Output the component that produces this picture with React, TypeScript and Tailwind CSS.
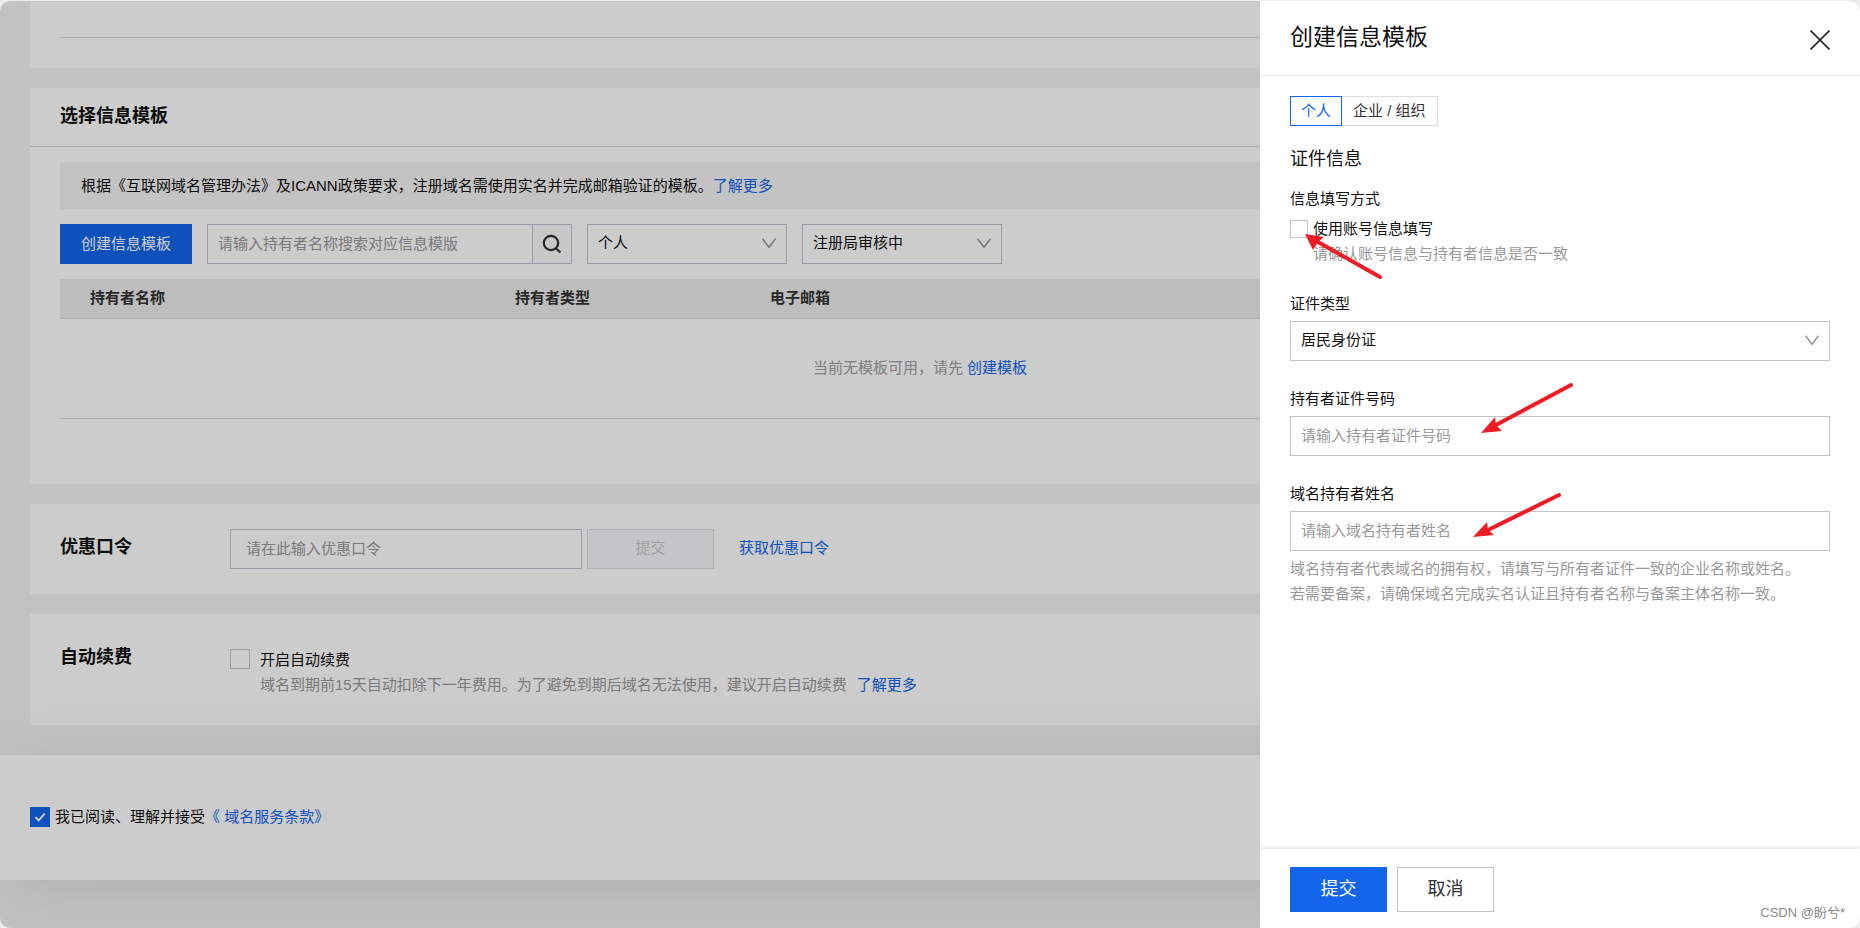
import { useState, type ReactNode } from "react"

const textInput =
  "block h-10 w-full border border-[#c2c2cf] bg-white px-[10px] pb-[2px] text-[15px] text-[#111] outline-none placeholder:text-[#999]"

function Chevron() {
  return (
    <svg
      className="pointer-events-none absolute top-[14px] right-[10px] h-[12px] w-[16px]"
      viewBox="0 0 16 12"
      fill="none"
      stroke="#999"
      strokeWidth="1.6"
    >
      <path d="M1.5 .8 8 9.3 14.5 .8" />
    </svg>
  )
}

function SelectBox({ id, label, value }: { id: string; label?: string; value: string }) {
  return (
    <div className="relative">
      <select
        id={id}
        aria-label={label}
        className="block h-10 w-full appearance-none border border-[#c2c2cf] bg-white px-[10px] pb-[2px] text-[15px] text-[#111] outline-none"
      >
        <option>{value}</option>
      </select>
      <Chevron />
    </div>
  )
}

function Link({ children }: { children: ReactNode }) {
  return (
    <a href="#" className="text-[#1366ec]">
      {children}
    </a>
  )
}

function TemplateSection() {
  return (
    <section className="bg-white pb-[65px]">
      <h2 className="border-b border-[#d9d9d9] px-[30px] pt-[15px] pb-4 text-[18px] leading-[27px] font-bold">
        选择信息模板
      </h2>
      <div className="px-[30px] pt-[15px]">
        <p className="bg-[#f4f4f4] px-[21px] py-3 leading-[23px]">
          根据《互联网域名管理办法》及ICANN政策要求，注册域名需使用实名并完成邮箱验证的模板。
          <Link>了解更多</Link>
        </p>
        <div className="mt-[15px] flex gap-[15px]">
          <button className="h-10 w-[132px] bg-[#1366ec] text-white">创建信息模板</button>
          <div className="flex w-[365px]">
            <input aria-label="搜索信息模版" placeholder="请输入持有者名称搜索对应信息模版" className={textInput} />
            <button
              aria-label="搜索"
              className="flex h-10 w-[39px] shrink-0 items-center justify-center border border-l-0 border-[#c2c2cf] bg-[#fafafa]"
            >
              <svg className="h-5 w-5" viewBox="0 0 20 20" fill="none" stroke="#333" strokeWidth="2.2">
                <circle cx="9" cy="9" r="7.2" />
                <path d="m13.5 14 5 4.5" />
              </svg>
            </button>
          </div>
          <div className="w-[200px]">
            <SelectBox id="owner-type" label="持有者类型" value="个人" />
          </div>
          <div className="w-[200px]">
            <SelectBox id="status" label="状态" value="注册局审核中" />
          </div>
        </div>
        <table className="mt-[15px] w-full table-fixed border-collapse">
          <thead>
            <tr className="h-[39px] border-b border-[#d9d9d9] bg-[#ededed] text-left text-[#333]">
              <th className="w-[425px] pl-[30px] font-bold">持有者名称</th>
              <th className="w-[255px] pl-[30px] font-bold">持有者类型</th>
              <th className="pl-[30px] font-bold">电子邮箱</th>
            </tr>
          </thead>
          <tbody>
            <tr className="h-[100px] border-b border-[#d9d9d9]">
              <td colSpan={3} className="text-center text-[#9b9ea0]">
                当前无模板可用，请先 <Link>创建模板</Link>
              </td>
            </tr>
          </tbody>
        </table>
      </div>
    </section>
  )
}

function PromoSection() {
  return (
    <section className="flex bg-white px-[30px] pt-[25px] pb-[25px]">
      <h2 className="w-[170px] pt-[5px] text-[18px] leading-[27px] font-bold">优惠口令</h2>
      <div className="flex items-center">
        <input
          aria-label="优惠口令"
          placeholder="请在此输入优惠口令"
          className="h-10 w-[352px] border border-[#c2c2cf] bg-white px-[15px] outline-none placeholder:text-[#999]"
        />
        <button disabled className="ml-[5px] h-10 w-[127px] border border-[#dedee4] bg-[#f7f7fa] text-[#c8c8c8]">
          提交
        </button>
        <span className="ml-[25px]">
          <Link>获取优惠口令</Link>
        </span>
      </div>
    </section>
  )
}

function RenewSection() {
  return (
    <section className="flex bg-white px-[30px] pt-[30px] pb-[28px]">
      <h2 className="w-[170px] text-[18px] leading-[27px] font-bold">自动续费</h2>
      <div className="flex gap-[10px] pt-[3px]">
        <input
          id="renew"
          type="checkbox"
          className="mt-[2px] h-5 w-5 shrink-0 appearance-none border border-[#c2c2cf] bg-white"
        />
        <div className="leading-[25px]">
          <label htmlFor="renew" className="block">
            开启自动续费
          </label>
          <p className="text-[#999]">
            域名到期前15天自动扣除下一年费用。为了避免到期后域名无法使用，建议开启自动续费
            <span className="ml-[10px]">
              <Link>了解更多</Link>
            </span>
          </p>
        </div>
      </div>
    </section>
  )
}

function Agreement() {
  const [agreed, setAgreed] = useState(true)
  return (
    <footer className="relative mt-[30px] flex h-[125px] items-center bg-white px-[30px] shadow-[0_10px_80px_rgba(0,0,0,0.1)]">
      <div className="relative h-5 w-5">
        <input
          id="agree"
          type="checkbox"
          checked={agreed}
          onChange={(e) => setAgreed(e.target.checked)}
          className="block h-5 w-5 appearance-none border border-[#c2c2cf] bg-white checked:border-[#1366ec] checked:bg-[#1366ec]"
        />
        {agreed && (
          <svg
            className="pointer-events-none absolute inset-0 h-5 w-5"
            viewBox="0 0 20 20"
            fill="none"
            stroke="#fff"
            strokeWidth="2"
          >
            <path d="M5.5 10.2 8.7 13.4 14.7 6.6" />
          </svg>
        )}
      </div>
      <label htmlFor="agree" className="pl-[5px]">
        我已阅读、理解并接受
      </label>
      <Link>《 域名服务条款》</Link>
    </footer>
  )
}

function Drawer() {
  const [tab, setTab] = useState("个人")
  return (
    <aside className="absolute inset-y-0 right-0 flex w-[600px] flex-col overflow-hidden bg-white">
      <header className="flex items-start justify-between border-b border-[#ebebeb] px-[30px] pt-[19px] pb-[21px]">
        <h1 className="text-[23px] leading-[34px]">创建信息模板</h1>
        <button aria-label="关闭" className="pt-[9px]">
          <svg className="h-[22px] w-[20px]" viewBox="0 0 20 22" fill="none" stroke="#222" strokeWidth="1.6">
            <path d="m.5 1.5 19 19M19.5 1.5l-19 19" />
          </svg>
        </button>
      </header>

      <div className="flex-1 px-[30px] pt-5">
        <div className="flex">
          {["个人", "企业 / 组织"].map((name) => (
            <button
              key={name}
              onClick={() => setTab(name)}
              className={
                tab === name
                  ? "h-[30px] border border-[#1366ec] px-[10px] text-[#1366ec]"
                  : "h-[30px] border border-l-0 border-[#dedede] px-[11px] text-[#333]"
              }
            >
              {name}
            </button>
          ))}
        </div>
        <h2 className="mt-5 text-[18px] leading-[27px]">证件信息</h2>

        <p className="mt-[13px] leading-[25px]">信息填写方式</p>
        <div className="mt-[5px] flex gap-[5px]">
          <input
            id="use-account"
            type="checkbox"
            className="mt-1 h-[18px] w-[18px] shrink-0 appearance-none border border-[#c2c2cf] bg-white"
          />
          <div className="leading-[25px]">
            <label htmlFor="use-account" className="block">
              使用账号信息填写
            </label>
            <p className="text-[#999]">请确认账号信息与持有者信息是否一致</p>
          </div>
        </div>

        <label htmlFor="cert-type" className="mt-[25px] mb-[5px] block leading-[25px]">
          证件类型
        </label>
        <SelectBox id="cert-type" value="居民身份证" />

        <label htmlFor="cert-no" className="mt-[25px] mb-[5px] block leading-[25px]">
          持有者证件号码
        </label>
        <input id="cert-no" placeholder="请输入持有者证件号码" className={textInput} />

        <label htmlFor="owner-name" className="mt-[25px] mb-[5px] block leading-[25px]">
          域名持有者姓名
        </label>
        <input id="owner-name" placeholder="请输入域名持有者姓名" className={textInput} />
        <p className="mt-[5px] leading-[25px] text-[#999]">
          域名持有者代表域名的拥有权，请填写与所有者证件一致的企业名称或姓名。
          <br />
          若需要备案，请确保域名完成实名认证且持有者名称与备案主体名称一致。
        </p>
      </div>

      <footer className="flex gap-[10px] px-[30px] pt-[18px] pb-[16px] text-[18px] shadow-[0_-1px_4px_rgba(0,0,0,0.14)]">
        <button className="h-[45px] w-[97px] bg-[#1366ec] text-white">提交</button>
        <button className="h-[45px] w-[97px] border border-[#c2c2cf] text-[#333]">取消</button>
      </footer>

      {/* red pointers drawn over the form */}
      <svg className="pointer-events-none absolute top-0 left-0 h-[600px] w-[600px]" viewBox="0 1 600 600">
        <g stroke="#ee1c25" strokeWidth="4" strokeLinecap="round">
          <path d="M58 242 120 277" />
          <path d="M311 385 234 426" />
          <path d="M299 495 226 531" />
        </g>
        <g fill="#ee1c25">
          <path d="M45 234 64 237 58 242 53 250Z" />
          <path d="M221 433 235 417 236 425 242 431Z" />
          <path d="M213 537 227 522 228 530 234 535Z" />
        </g>
      </svg>
      <span className="absolute right-[15px] bottom-[5px] text-[13px] leading-[20px] text-[#8a8a8a]">CSDN @盼兮*</span>
    </aside>
  )
}

export default function App() {
  return (
    <div className="h-screen bg-[#ececec] pt-px font-['Liberation_Sans','Noto_Sans_CJK_SC',sans-serif] text-[15px] text-[#111]">
      <div className="relative h-full overflow-hidden rounded-[10px] bg-[#f4f4f4]">
        <main className="flex flex-col gap-5 pr-[50px] pl-[30px]">
          <section className="bg-white px-[30px] pt-9 pb-[30px]">
            <hr className="border-[#d9d9d9]" />
          </section>
          <TemplateSection />
          <PromoSection />
          <RenewSection />
        </main>
        <Agreement />
        <div className="absolute inset-0 bg-black/20" />
        <Drawer />
      </div>
    </div>
  )
}
